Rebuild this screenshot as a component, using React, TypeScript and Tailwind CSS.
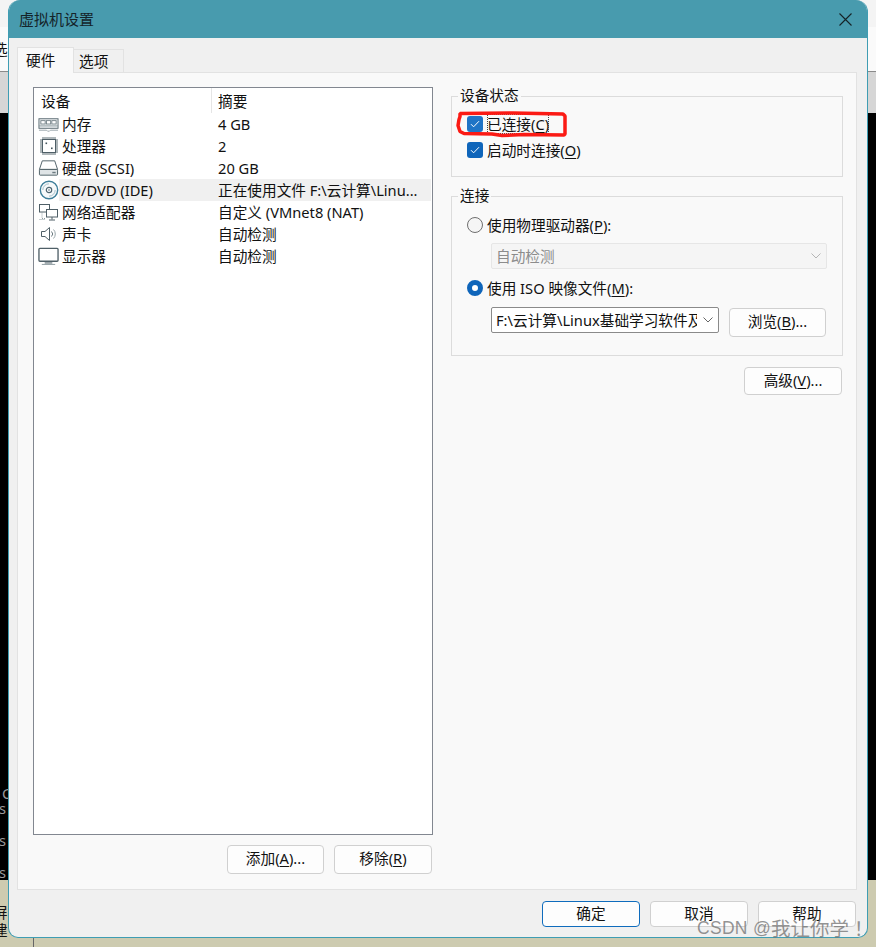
import React from "react";

const Memory = () => (
  <svg width="22" height="16" viewBox="0 0 22 16" fill="none">
    <rect x="1" y="2.500" width="20" height="10" fill="#eef1f2" stroke="#5b6b73" />
    <rect x="3" y="4.500" width="4.500" height="3.500" fill="#fff" stroke="#6b7a80" strokeWidth="0.900" />
    <rect x="8.800" y="4.500" width="4.500" height="3.500" fill="#fff" stroke="#6b7a80" strokeWidth="0.900" />
    <rect x="14.500" y="4.500" width="4.500" height="3.500" fill="#fff" stroke="#6b7a80" strokeWidth="0.900" />
    <path d="M1 10h20" stroke="#8d9aa0" />
    <path d="M1 14.500h8l1 1h2l1-1h8" stroke="#9aa6ab" />
  </svg>
);
const Cpu = () => (
  <svg width="20" height="20" viewBox="0 0 20 20" fill="none">
    <rect x="3.500" y="3.500" width="13" height="13" fill="#fff" stroke="#4f5f67" />
    <path d="M4 1v2M6 1v2M8 1v2M10 1v2M12 1v2M14 1v2M16 1v2M4 17v2M6 17v2M8 17v2M10 17v2M12 17v2M14 17v2M16 17v2M1 4h2M1 6h2M1 8h2M1 10h2M1 12h2M1 14h2M1 16h2M17 4h2M17 6h2M17 8h2M17 10h2M17 12h2M17 14h2M17 16h2" stroke="#5f6e75" strokeWidth="1" />
    <rect x="6.500" y="6.500" width="1.600" height="1.600" fill="#41525a" />
    <rect x="12" y="11.500" width="1.600" height="1.600" fill="#41525a" />
  </svg>
);
const Disk = () => (
  <svg width="22" height="18" viewBox="0 0 22 18" fill="none">
    <path d="M4.500 1.500h13L20.500 10.500H1.500z" fill="#fff" stroke="#4f5f67" />
    <rect x="1.500" y="10.500" width="19" height="6" rx="0.800" fill="#dfe4e6" stroke="#4f5f67" />
    <rect x="15" y="13" width="3.500" height="1.500" fill="#6b7a80" />
  </svg>
);
const Cd = () => (
  <svg width="20" height="20" viewBox="0 0 20 20" fill="none">
    <circle cx="10" cy="10" r="8.700" fill="#f6f9fa" stroke="#3f7f9a" strokeWidth="1.400" />
    <path d="M3.800 10a6.200 6.200 0 0 1 6.200-6.200" stroke="#a7c0cb" />
    <path d="M16.200 10a6.200 6.200 0 0 1-6.200 6.200" stroke="#a7c0cb" />
    <circle cx="10" cy="10" r="2.700" fill="#fff" stroke="#4f6672" strokeWidth="1.200" />
    <circle cx="10" cy="10" r="0.800" fill="#4f6672" />
  </svg>
);
const Net = () => (
  <svg width="21" height="19" viewBox="0 0 21 19" fill="none">
    <rect x="1.500" y="1.500" width="10" height="7.500" fill="#fff" stroke="#4f5f67" />
    <rect x="8.500" y="6.500" width="11" height="7.500" fill="#fff" stroke="#4f5f67" />
    <path d="M14 14v2.500M11 17h6" stroke="#4f5f67" />
    <path d="M4 9.500v6h3" stroke="#8d9aa0" strokeDasharray="1 1" />
    <path d="M1.500 16.500h6" stroke="#8d9aa0" strokeDasharray="1 1" />
  </svg>
);
const Speaker = () => (
  <svg width="18" height="16" viewBox="0 0 18 16" fill="none">
    <path d="M1.500 5.500h3.500l4.500-4v13l-4.500-4H1.500z" fill="#fff" stroke="#4f5f67" />
    <path d="M11.500 5.500a3.500 3.500 0 0 1 0 5" stroke="#6b7a80" />
    <path d="M13.500 3.500a6.500 6.500 0 0 1 0 9" stroke="#9aa6ab" />
  </svg>
);
const Monitor = () => (
  <svg width="22" height="19" viewBox="0 0 22 19" fill="none">
    <rect x="1" y="1" width="20" height="13.500" rx="1" fill="#fff" stroke="#4f5f67" strokeWidth="1.400" />
    <path d="M7 15.500h8v1.500H7z" fill="#7d8a90" />
    <path d="M4 17.800h14" stroke="#8d9aa0" />
  </svg>
);

const Chevron = ({ color }: { color: string }) => (
  <svg width="10" height="6" viewBox="0 0 10 6" fill="none">
    <path d="M.5.500 5 5 9.500.500" stroke={color} />
  </svg>
);

const Check = ({ light }: { light?: boolean }) => (
  <span className={`w-4 h-4 rounded-[3px] flex items-center justify-center shrink-0 ${light ? "bg-[#1f74c6]" : "bg-[#0f65ba]"}`}>
    <svg width="10" height="8" viewBox="0 0 10 8" fill="none">
      <path d="M1 4.200 3.600 6.800 9 1.200" stroke="#fff" strokeWidth="1" />
    </svg>
  </span>
);

const Key = ({ k }: { k: string }) => (
  <>
    (<span className="underline underline-offset-2">{k}</span>)
  </>
);

const Btn = ({ children, cls = "" }: { children: React.ReactNode; cls?: string }) => (
  <div className={`flex items-center justify-center rounded-[4px] border bg-[#fdfdfd] border-[#d0d0d0] text-[#111] pb-[3px] ${cls}`}>
    {children}
  </div>
);

const rows = [
  { icon: <Memory />, name: "内存", val: "4 GB" },
  { icon: <Cpu />, name: "处理器", val: "2" },
  { icon: <Disk />, name: "硬盘 (SCSI)", val: "20 GB" },
  { icon: <Cd />, name: "CD/DVD (IDE)", val: "正在使用文件 F:\\云计算\\Linu...", sel: true },
  { icon: <Net />, name: "网络适配器", val: "自定义 (VMnet8 (NAT)" },
  { icon: <Speaker />, name: "声卡", val: "自动检测" },
  { icon: <Monitor />, name: "显示器", val: "自动检测" },
];

export default function App() {
  return (
    <div
      className="relative w-[876px] h-[947px] overflow-hidden text-[14.67px] leading-[16px] text-[#111]"
      style={{ fontFamily: '"Noto Sans", "Noto Sans CJK SC", sans-serif' }}
    >
      {/* desktop behind the dialog */}
      <div className="absolute inset-0 flex flex-col">
        <div className="h-[27px] bg-[#f4f4f4]" />
        <div className="h-[45px] bg-[#fafafa] border-b border-[#8a8a8a] flex items-center overflow-hidden">
          <span className="-ml-[7px]">选</span>
        </div>
        <div className="h-[41px] bg-[#d6d6d6]" />
        <div className="h-[767px] bg-black relative text-[#9a9a9a]">
          <span className="absolute left-[2px] top-[672px]">C</span>
          <span className="absolute -left-[1px] top-[687px]">s</span>
          <span className="absolute -left-[1px] top-[719px]">s</span>
          <span className="absolute -left-[1px] top-[751px]">s</span>
        </div>
        <div className="flex-1 bg-[#cdcbb0] relative text-[#111]">
          <span className="absolute -left-[7px] top-[24px]">屏</span>
          <span className="absolute -left-[7px] top-[42px]">建</span>
          <span className="absolute left-[33px] top-[58px] w-px h-[9px] bg-[#666]" />
        </div>
      </div>

      {/* dialog */}
      <div className="relative ml-2 w-[860px] h-[938px] rounded-[10px] rounded-tl-[12px] rounded-tr-[12px] border border-t-0 border-[#3f9db3] bg-[#f0f0f0] flex flex-col overflow-hidden">
        <div className="h-[38px] shrink-0 bg-[#489bae] flex items-center justify-between pl-[10px] pr-[15px]">
          <span className="text-[15px] text-[#14242a]">虚拟机设置</span>
          <svg width="13" height="13" viewBox="0 0 13 13" fill="none">
            <path d="M.5.500 12.500 12.500M12.500.500.500 12.500" stroke="#152327" strokeWidth="1.100" />
          </svg>
        </div>

        {/* tabs */}
        <div className="h-[34px] shrink-0 pl-2 flex items-end">
          <div className="w-[57px] h-[26px] -mb-px relative bg-[#f9f9f9] border border-b-0 border-[#e2e2e2] flex items-center pl-2 pb-[2px]">
            硬件
          </div>
          <div className="w-[50px] h-[23px] bg-[#f0f0f0] border border-l-0 border-b-0 border-[#e2e2e2] flex items-center pl-[5px]">
            选项
          </div>
        </div>

        {/* panel */}
        <div className="ml-2 w-[840px] h-[818px] shrink-0 bg-[#f9f9f9] border border-[#e2e2e2] flex pl-[15px] pt-[14px]">
          <div className="w-[400px] flex flex-col">
            <div className="h-[748px] bg-white border border-[#828790] flex flex-col">
              <div className="h-[25px] flex items-center shrink-0">
                <span className="w-[178px] pl-[7px] h-full flex items-center border-r border-[#e5e5e5]">设备</span>
                <span className="pl-[6px]">摘要</span>
              </div>
              {rows.map((r) => (
                <div key={r.name} className="h-[22px] flex items-center shrink-0">
                  <span className="w-[25px] h-[22px] shrink-0 flex items-center justify-center pl-[4px]">{r.icon}</span>
                  <div className={`flex flex-1 h-full items-center mr-px pb-px ${r.sel ? "bg-[#f0f0f0]" : ""}`}>
                    <span className={`w-[152px] shrink-0 whitespace-nowrap ${r.sel ? "pl-[2px]" : "pl-[3px]"}`}>{r.name}</span>
                    <span className="pl-[7px] whitespace-nowrap">{r.val}</span>
                  </div>
                </div>
              ))}
            </div>
            <div className="flex justify-end gap-[10px] mt-[10px] pr-px">
              <Btn cls="w-[97px] h-[29px]">
                添加<Key k="A" />...
              </Btn>
              <Btn cls="w-[98px] h-[29px]">
                移除<Key k="R" />
              </Btn>
            </div>
          </div>

          <div className="ml-[18px] w-[392px] pt-[9px] flex flex-col">
            <div className="h-[81px] border border-[#dcdcdc] pl-[15px] shrink-0">
              <div className="-mt-[10px] -ml-[9px] w-fit px-[2px] bg-[#f9f9f9] h-[18px] flex items-center pb-[2px]">设备状态</div>
              <div className="mt-[11px] flex flex-col gap-[10px]">
                <div className="flex items-center h-4 gap-[4px]">
                  <Check light />
                  <span className="outline-1 outline-dotted outline-[#444] -outline-offset-1 h-[20px] flex items-center pb-px">
                    已连接<Key k="C" />
                  </span>
                </div>
                <div className="flex items-center h-4 gap-[4px]">
                  <Check />
                  <span className="-mt-px">
                    启动时连接<Key k="O" />
                  </span>
                </div>
              </div>
            </div>

            <div className="mt-[19px] h-[160px] border border-[#dcdcdc] pl-[15px] shrink-0">
              <div className="-mt-[10px] -ml-[9px] w-fit px-[2px] bg-[#f9f9f9] h-[18px] flex items-center pb-[2px]">连接</div>
              <div className="mt-[12px] flex items-center h-4 gap-[4px]">
                <span className="w-4 h-4 rounded-full border border-[#6f6f6f] bg-[#f5f5f5] shrink-0" />
                <span className="-mt-px">
                  使用物理驱动器<Key k="P" />:
                </span>
              </div>
              <div className="mt-[10px] ml-[24px] w-[336px] h-[26px] bg-[#f5f5f5] border border-[#e6e6e6] rounded-[2px] flex items-center justify-between pl-[4px] pr-[5px] text-[#8c8c8c]">
                自动检测
                <Chevron color="#b5b5b5" />
              </div>
              <div className="mt-[11px] flex items-center h-4 gap-[4px]">
                <span className="w-4 h-4 rounded-full border-[5px] border-[#0f65ba] bg-white shrink-0" />
                <span className="-mt-px">
                  使用 ISO 映像文件<Key k="M" />:
                </span>
              </div>
              <div className="mt-[11px] ml-[24px] flex items-start">
                <div className="w-[228px] h-[26px] bg-white border border-[#8a8a8a] rounded-[2px] flex items-center pl-[4px] pr-[5px] justify-between overflow-hidden">
                  <span className="whitespace-nowrap overflow-hidden w-[201px]">F:\云计算\Linux基础学习软件及</span>
                  <Chevron color="#666" />
                </div>
                <Btn cls="ml-[10px] mt-px w-[97px] h-[29px]">
                  浏览<Key k="B" />...
                </Btn>
              </div>
            </div>

            <div className="flex justify-end mt-[11px] pr-px">
              <Btn cls="w-[98px] h-[28px]">
                高级<Key k="V" />...
              </Btn>
            </div>
          </div>
        </div>

        {/* footer */}
        <div className="flex justify-end gap-[10px] pt-[11px] pr-[11px]">
          <Btn cls="w-[98px] h-[26px] !border-[#0f6cbd]">确定</Btn>
          <Btn cls="w-[98px] h-[26px]">取消</Btn>
          <Btn cls="w-[98px] h-[26px]">帮助</Btn>
        </div>
      </div>

      {/* hand-drawn annotation */}
      <svg className="absolute left-[453px] top-[110px]" width="116" height="30" viewBox="0 0 116 30" fill="none">
        <path
          d="M7 3.500 60 3l50 1 2 2v18l-1 1-40-.500-22 1-10-1.500-28-.500-4-2-2-6 1-6 1-3Z"
          stroke="#fb1a14"
          strokeWidth="3.500"
          strokeLinejoin="bevel"
        />
      </svg>

      {/* watermark */}
      <span className="absolute left-[697px] top-[917px] leading-[22px] text-[#707070]/75 whitespace-nowrap flex items-center">
        <span className="text-[17.500px] tracking-[0.3px]" style={{ fontFamily: '"Liberation Sans", sans-serif' }}>
          CSDN @
        </span>
        <span className="text-[19.500px]" style={{ fontFamily: '"Noto Sans CJK TC", sans-serif' }}>
          我让你学！
        </span>
      </span>
    </div>
  );
}
